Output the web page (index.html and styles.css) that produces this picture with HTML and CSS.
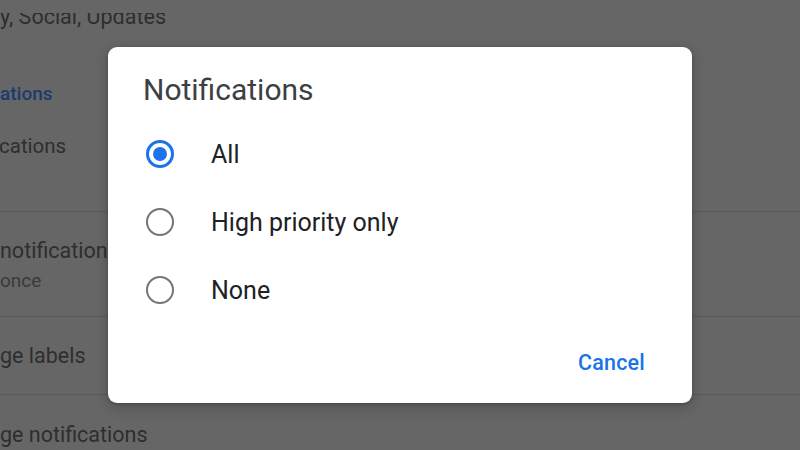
FILE: index.html
```html
<!DOCTYPE html>
<html>
<head>
<meta charset="utf-8">
<link rel="stylesheet" href="styles.css">
</head>
<body>
<div class="page">
  <section class="sec sec-a">
    <div class="clip">
      <div class="row r1">y, Social, Updates</div>
    </div>
    <div class="hdr">ations</div>
    <div class="row r2">cations</div>
  </section>
  <section class="sec sec-b">
    <div class="row">notifications</div>
    <div class="sub">once</div>
  </section>
  <section class="sec sec-c">
    <div class="row">ge labels</div>
  </section>
  <section class="sec sec-d">
    <div class="row">ge notifications</div>
  </section>
</div>

<div class="dialog">
  <h1 class="title">Notifications</h1>
  <div class="options">
    <label class="opt">
      <span class="radio on"><span class="dot"></span></span>
      <span class="lbl">All</span>
    </label>
    <label class="opt">
      <span class="radio"></span>
      <span class="lbl">High priority only</span>
    </label>
    <label class="opt">
      <span class="radio"></span>
      <span class="lbl">None</span>
    </label>
  </div>
  <div class="actions">
    <span class="btn">Cancel</span>
  </div>
</div>
</body>
</html>
```
FILE: styles.css
```css
html, body {
  margin: 0;
  padding: 0;
  width: 800px;
  height: 450px;
  overflow: hidden;
  background: #666666;
  font-family: Roboto, "Liberation Sans", sans-serif;
}

.page {
  display: flex;
  flex-direction: column;
  color: #2e2e2e;
}

.sec {
  box-sizing: border-box;
  border-bottom: 1px solid #5a5a5a;
}

.row {
  font-size: 21.5px;
  line-height: 24px;
  white-space: nowrap;
}

.sec-a {
  height: 212px;
}
.clip {
  margin-top: 13px;
  height: 18px;
  overflow: hidden;
}
.r1 {
  margin-top: -8px;
}
.hdr {
  margin-top: 53px;
  font-size: 19px;
  line-height: 20px;
  font-weight: 500;
  color: #1b3b6f;
}
.r2 {
  margin-top: 30px;
  margin-left: -1px;
  font-size: 20.5px;
}

.sec-b {
  height: 105px;
  padding-top: 27px;
}
.sub {
  margin-top: 8px;
  font-size: 19px;
  line-height: 20px;
  color: #3a3a3a;
}

.sec-c {
  height: 78px;
  padding-top: 27px;
}

.sec-d {
  border-bottom: none;
  padding-top: 28px;
}

.dialog {
  position: absolute;
  left: 108px;
  top: 47px;
  width: 584px;
  height: 356px;
  box-sizing: border-box;
  background: #ffffff;
  border-radius: 9px;
  box-shadow: 0 4px 14px rgba(0,0,0,0.22), 0 1px 3px rgba(0,0,0,0.2);
  padding: 26px 47px 0 35px;
  display: flex;
  flex-direction: column;
}

.title {
  margin: 0;
  font-size: 30px;
  line-height: 34px;
  font-weight: 400;
  color: #3c4043;
}

.options {
  display: flex;
  flex-direction: column;
  margin-top: 13px;
}

.opt {
  display: flex;
  align-items: center;
  height: 68px;
}

.radio {
  box-sizing: border-box;
  width: 28px;
  height: 28px;
  margin-left: 3px;
  border: 2.5px solid #757575;
  border-radius: 50%;
  display: flex;
  align-items: center;
  justify-content: center;
  flex-shrink: 0;
}
.radio.on {
  border: 3px solid #1a73e8;
}
.dot {
  width: 14px;
  height: 14px;
  border-radius: 50%;
  background: #1a73e8;
}

.lbl {
  margin-left: 37px;
  font-size: 25px;
  color: #202124;
}

.actions {
  display: flex;
  justify-content: flex-end;
  margin-top: 26px;
}

.btn {
  font-size: 21.5px;
  font-weight: 500;
  color: #1a73e8;
  letter-spacing: 0.2px;
}
```
